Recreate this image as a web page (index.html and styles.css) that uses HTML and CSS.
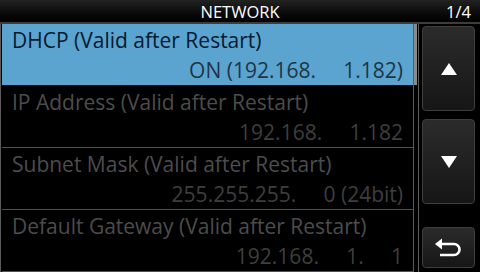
FILE: index.html
```html
<!DOCTYPE html>
<html>
<head>
<meta charset="utf-8">
<link rel="stylesheet" href="styles.css">
</head>
<body>
<div class="screen">
  <div class="header">
    <span></span>
    <span class="title">NETWORK</span>
    <span class="page">1/4</span>
  </div>
  <div class="main">
    <div class="list">
      <div class="row selected">
        <div class="name">DHCP (Valid after Restart)</div>
        <div class="value">ON (192.168.     1.182)</div>
      </div>
      <div class="row">
        <div class="name">IP Address (Valid after Restart)</div>
        <div class="value">192.168.     1.182</div>
      </div>
      <div class="row">
        <div class="name">Subnet Mask (Valid after Restart)</div>
        <div class="value">255.255.255.     0 (24bit)</div>
      </div>
      <div class="row">
        <div class="name">Default Gateway (Valid after Restart)</div>
        <div class="value">192.168.     1.     1</div>
      </div>
    </div>
    <div class="scroll"><div class="thumb"></div></div>
    <div class="buttons">
      <div class="btn tall"><svg width="16" height="12" viewBox="0 0 16 12"><polygon points="8,0 16,12 0,12" fill="#fff"/></svg></div>
      <div class="btn tall"><svg width="16" height="12" viewBox="0 0 16 12"><polygon points="0,0 16,0 8,12" fill="#fff"/></svg></div>
      <div class="btn short"><svg width="27" height="19" viewBox="0 0 27 19"><polygon points="0,6 7,0.5 7,11.5" fill="#fff"/><path d="M6 6 H19 A5.5 5.5 0 0 1 19 17 H5" fill="none" stroke="#fff" stroke-width="2.6"/></svg></div>
    </div>
  </div>
</div>
</body>
</html>
```
FILE: styles.css
```css
html, body {
  margin: 0;
  padding: 0;
  background: #000;
}
.screen {
  width: 480px;
  height: 272px;
  display: flex;
  flex-direction: column;
  font-family: "Open Sans", "Liberation Sans", sans-serif;
  overflow: hidden;
}
.header {
  height: 22px;
  display: grid;
  grid-template-columns: 1fr auto 1fr;
  align-items: center;
  background: linear-gradient(#222, #0a0a0a 60%, #000);
  border-bottom: 2px solid #3d3d3d;
  color: #fff;
  font-size: 16.5px;
}
.title {
  line-height: 22px;
}
.page {
  justify-self: end;
  padding-right: 9px;
}
.main {
  display: flex;
  flex: 1;
}
.list {
  width: 411px;
  border-left: 1px solid #5a5a5a;
  padding-left: 1px;
}
.row {
  height: 61px;
  border-bottom: 1px solid #505050;
  box-sizing: content-box;
  font-size: 21px;
  color: #4c4c4c;
}
.row .name {
  padding-left: 10px;
  line-height: 28px;
  padding-top: 2px;
  white-space: nowrap;
}
.row .value {
  text-align: right;
  padding-right: 10px;
  padding-top: 2px;
  white-space: pre;
  line-height: 28px;
  color: #3e3e3e;
}
.row.selected {
  background: #5aa4cf;
  border-bottom-color: #000;
}
.row.selected .name {
  color: #061a33;
}
.row.selected .value {
  color: #1e3546;
}
.scroll {
  width: 4px;
  border-left: 1px solid #5c5c5c;
  border-right: 1px solid #5c5c5c;
}
.thumb {
  width: 3px;
  height: 61px;
  background: #8a8a8a;
}
.buttons {
  display: flex;
  flex-direction: column;
  padding: 2px 3px 0 3px;
}
.btn {
  width: 53px;
  box-sizing: border-box;
  border: 1px solid #3e3e3e;
  border-radius: 4px;
  background: linear-gradient(#2b2b2b, #161616);
  display: flex;
  align-items: center;
  justify-content: center;
}
.btn.tall {
  height: 85px;
  margin-bottom: 8px;
}
.btn.short {
  height: 41px;
  margin-top: 15px;
}
```
